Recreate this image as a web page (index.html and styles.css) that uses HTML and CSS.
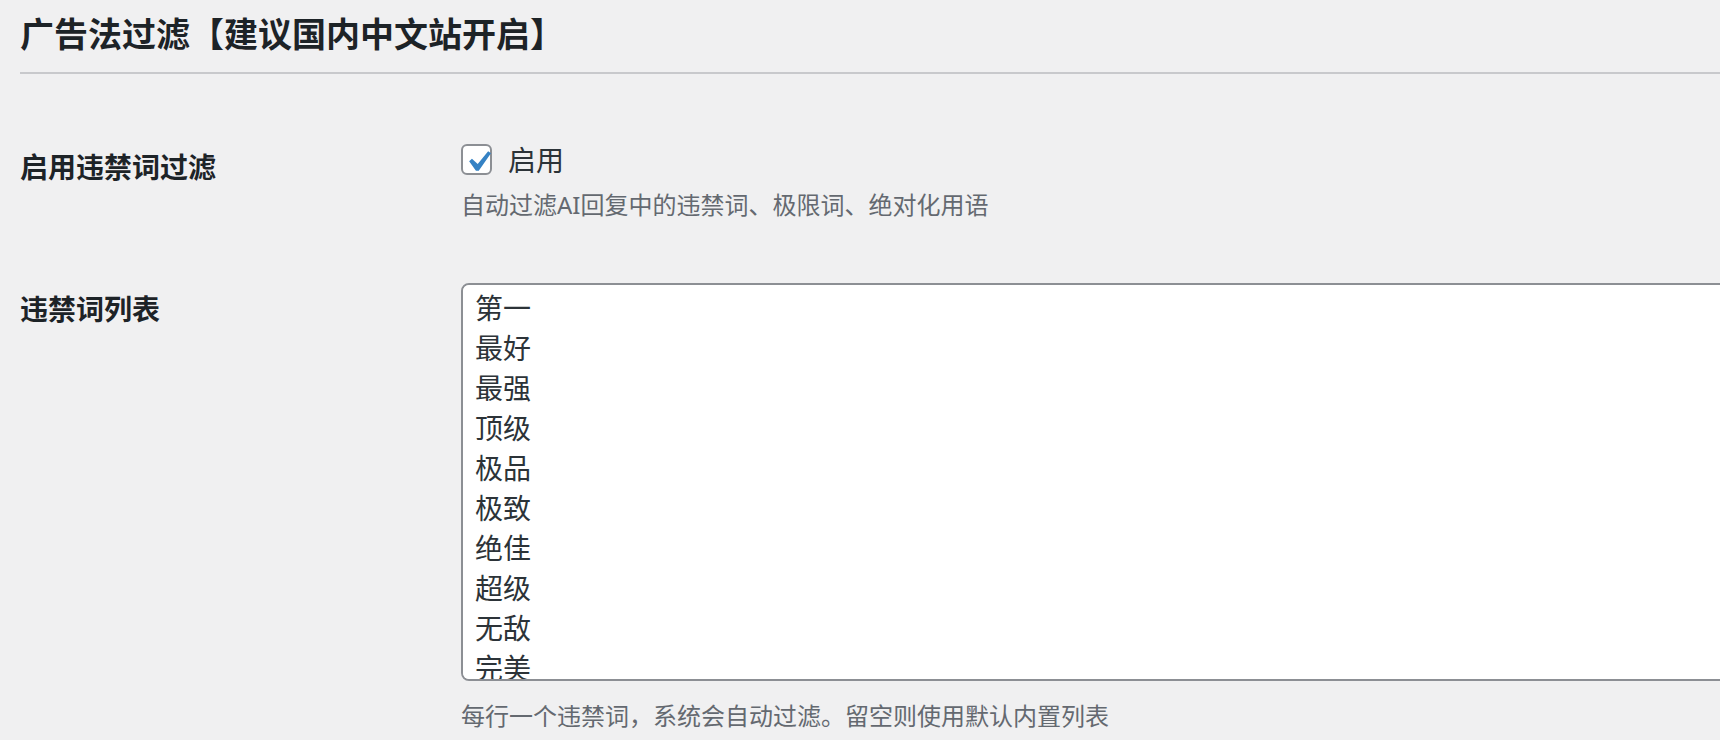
FILE: index.html
```html
<!DOCTYPE html>
<html lang="zh-CN">
<head>
<meta charset="utf-8">
<title>广告法过滤</title>
<link rel="stylesheet" href="styles.css">
</head>
<body>
<div class="wrap">
  <h2 class="title">广告法过滤【建议国内中文站开启】</h2>
  <hr class="sep">
  <div class="form">
    <div class="row row-enable">
      <div class="th">启用违禁词过滤</div>
      <div class="td">
        <label class="opt">
          <span class="cbox"><svg class="check" viewBox="0 0 20 20" width="42" height="42"><path d="M14.83 4.89l1.34.94-5.81 8.38H9.02L5.78 9.67l1.34-1.25 2.74 2.57z" fill="#3582c4"/></svg></span>
          <span class="opt-text">启用</span>
        </label>
        <p class="desc desc-enable">自动过滤AI回复中的违禁词、极限词、绝对化用语</p>
      </div>
    </div>
    <div class="row row-list">
      <div class="th">违禁词列表</div>
      <div class="td">
        <textarea class="words" spellcheck="false">第一
最好
最强
顶级
极品
极致
绝佳
超级
无敌
完美
最佳
最高
最低
唯一
首个
国家级
世界级</textarea>
        <p class="desc hint">每行一个违禁词，系统会自动过滤。留空则使用默认内置列表</p>
      </div>
    </div>
  </div>
</div>
</body>
</html>
```

FILE: styles.css
```css
html, body {
  margin: 0;
  padding: 0;
  overflow: hidden;
  background: #f0f0f1;
}

body {
  font-family: "Noto Sans", "Noto Sans CJK SC", sans-serif;
  color: #1d2327;
}

.wrap {
  padding-left: 20px;
}

.title {
  margin: 12px 0 0;
  font-size: 34px;
  line-height: 44px;
  font-weight: 700;
  color: #1d2327;
}

.sep {
  margin: 16px 0 0;
  height: 0;
  border: 0;
  border-top: 2px solid #c8c9cc;
}

.row {
  display: grid;
  grid-template-columns: 441px minmax(0, 1fr);
}

.row-enable {
  margin-top: 67px;
}

.row-list {
  margin-top: 62px;
}

.th {
  padding-top: 8px;
  font-size: 28px;
  line-height: 36px;
  font-weight: 700;
  color: #1d2327;
}

.td {
  min-width: 0;
}

.opt {
  display: flex;
  align-items: center;
  height: 36px;
  font-size: 28px;
  color: #2c3338;
}

.cbox {
  position: relative;
  flex: none;
  width: 31px;
  height: 31px;
  box-sizing: border-box;
  border: 2px solid #8c8f94;
  border-radius: 6px;
  background: #ffffff;
  margin-right: 16px;
}

.check {
  position: absolute;
  left: -6px;
  top: -5px;
}

.desc {
  margin: 0;
  font-size: 24px;
  line-height: 32px;
  color: #646970;
}

.desc-enable {
  margin-top: 12px;
}

.words {
  display: block;
  box-sizing: border-box;
  width: 1400px;
  height: 398px;
  margin: 0;
  padding: 3px 12px;
  border: 2px solid #8c8f94;
  border-radius: 8px;
  background: #ffffff;
  font-family: "Noto Sans", "Noto Sans CJK SC", sans-serif;
  font-size: 28px;
  line-height: 40px;
  color: #2c3338;
  resize: none;
  outline: none;
}

.hint {
  margin-top: 19px;
}
```
